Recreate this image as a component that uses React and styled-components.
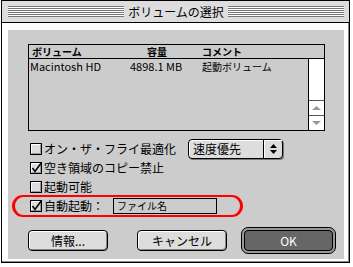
import React from 'react'
import styled, { createGlobalStyle } from 'styled-components'

const GlobalStyle = createGlobalStyle`
  body {
    margin: 0;
    background: #fff;
    font-family: "Noto Sans CJK JP", "DejaVu Sans", sans-serif;
    color: #000;
  }
`

const Window = styled.div`
  margin-left: 1px;
  width: 349px;
  height: 263px;
  box-sizing: border-box;
  border: 1px solid #000;
  display: flex;
  flex-direction: column;
  background: #fff;
`

const TitleBar = styled.div`
  height: 22px;
  box-sizing: border-box;
  border-bottom: 1px solid #000;
  background: #dddddd;
  display: flex;
  align-items: center;
  padding: 0 5px 0 6px;
`

const Stripes = styled.div`
  flex: 1;
  height: 11px;
  background: repeating-linear-gradient(to bottom, #777 0 1px, #fff 1px 2px);
`

const Title = styled.div`
  font-size: 12px;
  line-height: 1;
  padding: 0 4px;
`

const Frame = styled.div`
  flex: 1;
  display: flex;
  padding: 7px 5px 3px 6px;
  box-shadow: inset -1px -1px 0 #888;
`

const Panel = styled.div`
  flex: 1;
  background: #cccccc;
  padding: 14px 0 0 20px;
  display: flex;
  flex-direction: column;
`

const List = styled.div`
  width: 297px;
  height: 87px;
  box-sizing: border-box;
  border: 1px solid #000;
  display: flex;
  flex-direction: column;
`

const ListHeader = styled.div`
  height: 14px;
  box-sizing: border-box;
  border-bottom: 1px solid #000;
  display: flex;
  align-items: center;
  font-size: 10px;
  font-weight: 700;
  line-height: 1;
`

const Cell = styled.div`
  width: ${p => p.$w ? p.$w + 'px' : 'auto'};
  padding-left: ${p => p.$pl || 0}px;
  box-sizing: border-box;
  white-space: nowrap;
`

const ListBody = styled.div`
  flex: 1;
  display: flex;
`

const Rows = styled.div`
  flex: 1;
`

const Row = styled.div`
  height: 15px;
  display: flex;
  align-items: center;
  font-size: 11px;
  line-height: 1;
`

const Scroll = styled.div`
  width: 16px;
  box-sizing: border-box;
  border-left: 1px solid #000;
  background: #fff;
  display: flex;
  flex-direction: column;
`

const Track = styled.div`
  flex: 1;
`

const ArrowBox = styled.div`
  height: 15px;
  box-sizing: border-box;
  border-top: 1px solid #555;
  display: flex;
  align-items: center;
  justify-content: center;
`

const Options = styled.div`
  margin-top: 8px;
  display: flex;
  flex-direction: column;
`

const OptionRow = styled.div`
  position: relative;
  height: 19px;
  display: flex;
  align-items: center;
  padding-left: 2px;
`

const Label = styled.span`
  font-size: 12px;
  line-height: 1;
  margin-left: 2px;
  white-space: nowrap;
`

const Popup = styled.div`
  margin-left: 12px;
  width: 95px;
  height: 20px;
  box-sizing: border-box;
  border: 1px solid #000;
  border-radius: 4px;
  background: #dddddd;
  box-shadow: inset 1px 1px 0 #fff, 1px 1px 0 #777;
  display: flex;
  font-size: 12px;
`

const PopupText = styled.div`
  flex: 1;
  display: flex;
  align-items: center;
  padding-left: 4px;
  line-height: 1;
`

const PopupArrows = styled.div`
  width: 18px;
  border-left: 1px solid #000;
  display: flex;
  align-items: center;
  justify-content: center;
  box-shadow: inset 1px 1px 0 #fff;
`

const Field = styled.div`
  margin-left: 9px;
  width: 104px;
  height: 16px;
  box-sizing: border-box;
  border: 1px solid #000;
  display: flex;
  align-items: center;
  padding-left: 3px;
  font-size: 10px;
  line-height: 1;
`

const Highlight = styled.div`
  position: absolute;
  left: -16px;
  top: -1px;
  width: 231px;
  height: 22px;
  box-sizing: border-box;
  border: 2px solid #f00;
  border-left-width: 3px;
  border-right-width: 3px;
  border-radius: 11px;
  pointer-events: none;
`

const Buttons = styled.div`
  margin-top: 12px;
  height: 27px;
  display: flex;
  align-items: center;
`

const Button = styled.div`
  width: ${p => p.$w}px;
  margin-left: ${p => p.$ml || 0}px;
  height: 21px;
  box-sizing: border-box;
  border: 1px solid #000;
  border-radius: 4px;
  background: #dddddd;
  box-shadow: inset 1px 1px 0 #fff, inset -1px -1px 0 #888;
  display: flex;
  align-items: center;
  justify-content: center;
  font-size: 12px;
  line-height: 1;
`

const DefaultRing = styled.div`
  margin-left: 14px;
  width: 95px;
  height: 27px;
  box-sizing: border-box;
  border: 1px solid #000;
  border-radius: 7px;
  background: #999;
  padding: 2px;
  display: flex;
`

const OkButton = styled.div`
  flex: 1;
  box-sizing: border-box;
  border: 1px solid #000;
  border-radius: 4px;
  background: #666;
  color: #fff;
  display: flex;
  align-items: center;
  justify-content: center;
  font-size: 12px;
  line-height: 1;
`

function Checkbox({ checked }) {
  return (
    <svg width="12" height="12" viewBox="0 0 12 12" style={{ display: 'block', overflow: 'visible' }}>
      <rect x="0.5" y="0.5" width="11" height="11" fill="#ddd" stroke="#000" />
      <path d="M1.5 10.5V1.5H10.5" fill="none" stroke="#fff" />
      <path d="M10.5 1.5V10.5H1.5" fill="none" stroke="#999" />
      {checked && <polyline points="2.5,6 5,9.5 11.5,0.5" fill="none" stroke="#000" strokeWidth="1.6" />}
    </svg>
  )
}

function Triangle({ up, color, w = 9, h = 4 }) {
  return (
    <svg width={w} height={h} style={{ display: 'block' }}>
      <polygon points={up ? `0,${h} ${w},${h} ${w / 2},0` : `0,0 ${w},0 ${w / 2},${h}`} fill={color} />
    </svg>
  )
}

export default function App() {
  return (
    <>
      <GlobalStyle />
      <Window>
        <TitleBar>
          <Stripes />
          <Title>ボリュームの選択</Title>
          <Stripes />
        </TitleBar>
        <Frame>
          <Panel>
            <List>
              <ListHeader>
                <Cell $w={118} $pl={3}>ボリューム</Cell>
                <Cell $w={55}>容量</Cell>
                <Cell>コメント</Cell>
              </ListHeader>
              <ListBody>
                <Rows>
                  <Row>
                    <Cell $w={101} $pl={1}>Macintosh HD</Cell>
                    <Cell $w={72}>4898.1 MB</Cell>
                    <Cell style={{ fontSize: '10px' }}>起動ボリューム</Cell>
                  </Row>
                </Rows>
                <Scroll>
                  <Track />
                  <ArrowBox><Triangle up color="#999" /></ArrowBox>
                  <ArrowBox><Triangle color="#999" /></ArrowBox>
                </Scroll>
              </ListBody>
            </List>
            <Options>
              <OptionRow>
                <Checkbox />
                <Label>オン・ザ・フライ最適化</Label>
                <Popup>
                  <PopupText>速度優先</PopupText>
                  <PopupArrows>
                    <div>
                      <Triangle up color="#000" w={7} h={4} />
                      <div style={{ height: 2 }} />
                      <Triangle color="#000" w={7} h={4} />
                    </div>
                  </PopupArrows>
                </Popup>
              </OptionRow>
              <OptionRow>
                <Checkbox checked />
                <Label>空き領域のコピー禁止</Label>
              </OptionRow>
              <OptionRow>
                <Checkbox />
                <Label>起動可能</Label>
              </OptionRow>
              <OptionRow>
                <Highlight />
                <Checkbox checked />
                <Label>自動起動：</Label>
                <Field>ファイル名</Field>
              </OptionRow>
            </Options>
            <Buttons>
              <Button $w={80}>情報...</Button>
              <Button $w={90} $ml={29}>キャンセル</Button>
              <DefaultRing>
                <OkButton>OK</OkButton>
              </DefaultRing>
            </Buttons>
          </Panel>
        </Frame>
      </Window>
    </>
  )
}
